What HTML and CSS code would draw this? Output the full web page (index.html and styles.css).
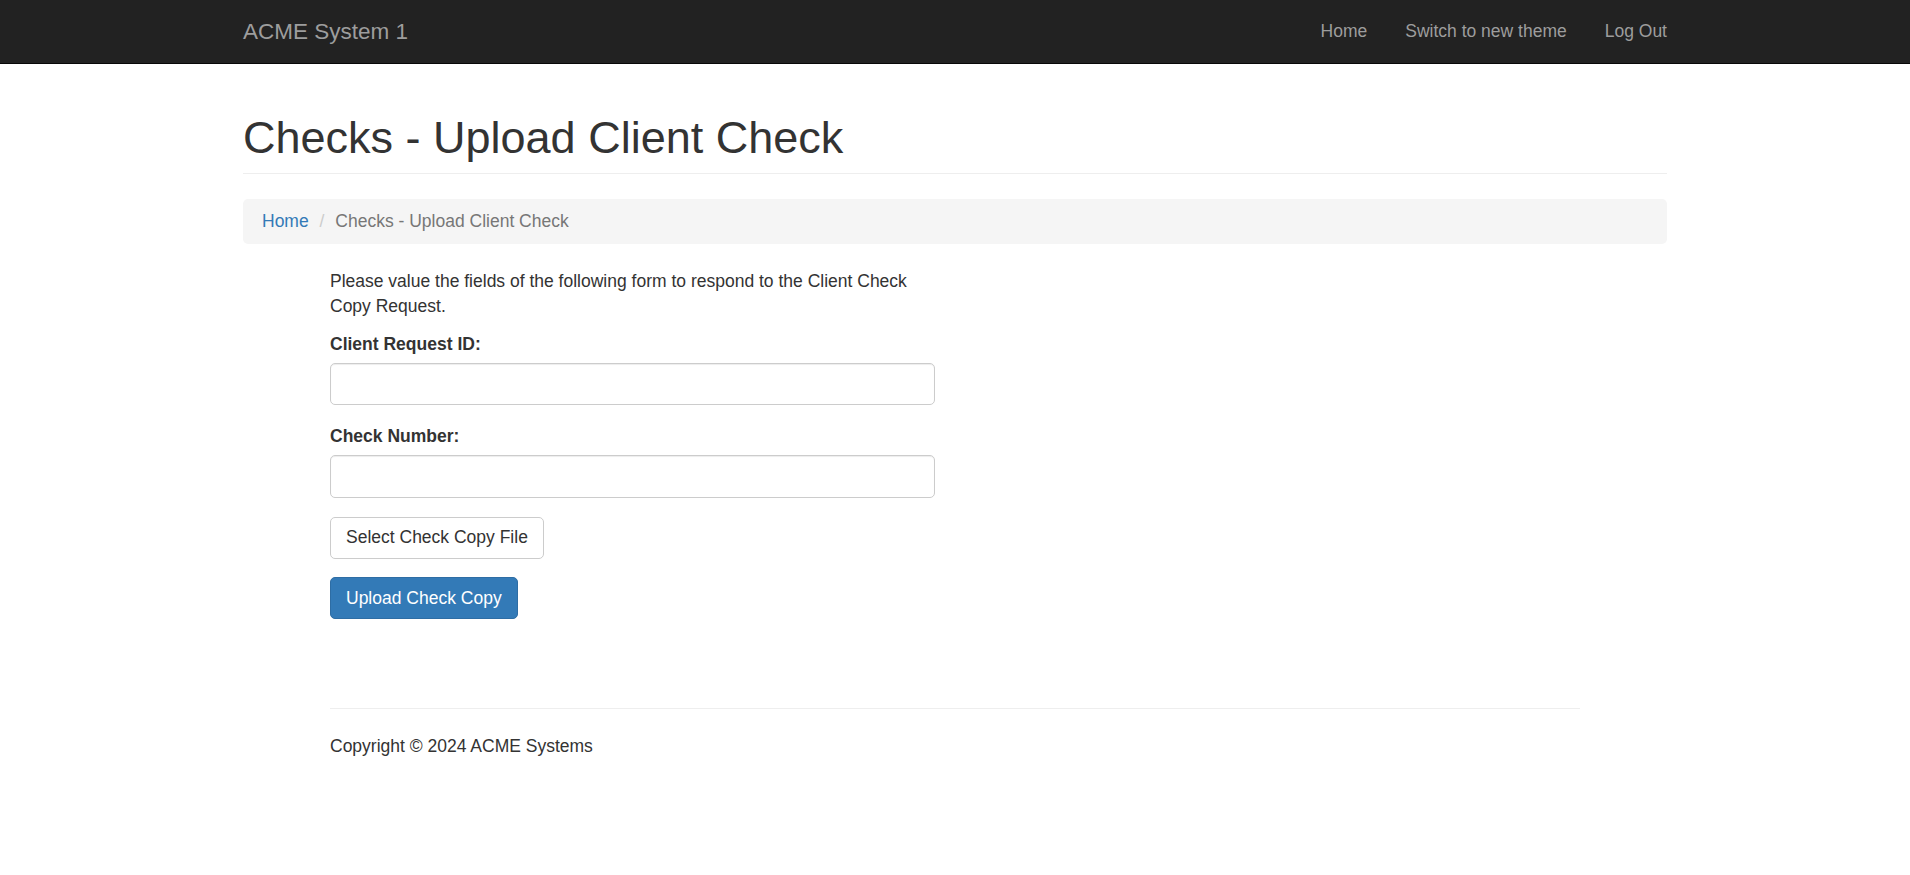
FILE: index.html
```html
<!DOCTYPE html>
<html lang="en">
<head>
<meta charset="utf-8">
<title>Checks - Upload Client Check</title>
<link rel="stylesheet" href="styles.css">
</head>
<body>
<nav class="navbar">
  <div class="container navbar-inner">
    <a class="brand" href="#">ACME System 1</a>
    <ul class="nav">
      <li><a href="#">Home</a></li>
      <li><a href="#">Switch to new theme</a></li>
      <li><a href="#">Log Out</a></li>
    </ul>
  </div>
</nav>
<div class="container">
  <h1 class="page-header">Checks - Upload Client Check</h1>
  <ol class="breadcrumb">
    <li><a href="#">Home</a></li>
    <li class="active">Checks - Upload Client Check</li>
  </ol>
</div>
<div class="inner">
  <form class="form">
    <p class="intro">Please value the fields of the following form to respond to the Client Check Copy Request.</p>
    <div class="form-group">
      <label for="reqid">Client Request ID:</label>
      <input id="reqid" class="form-control" type="text">
    </div>
    <div class="form-group">
      <label for="checknum">Check Number:</label>
      <input id="checknum" class="form-control" type="text">
    </div>
    <div class="form-group">
      <button type="button" class="btn btn-default">Select Check Copy File</button>
    </div>
    <div class="form-group">
      <button type="button" class="btn btn-primary">Upload Check Copy</button>
    </div>
  </form>
  <hr class="footer-rule">
  <footer class="footer">
    <p>Copyright © 2024 ACME Systems</p>
  </footer>
</div>
</body>
</html>
```
FILE: styles.css
```css
* {
  box-sizing: border-box;
}

html, body {
  margin: 0;
  padding: 0;
}

body {
  font-family: "Liberation Sans", Arial, Helvetica, sans-serif;
  font-size: 17.5px;
  line-height: 25px;
  color: #333;
  background: #fff;
}

a {
  color: #337ab7;
  text-decoration: none;
}

.container {
  width: 1462px;
  margin: 0 auto;
  padding: 0 19px;
}

/* Navbar */
.navbar {
  background: #222;
  border-bottom: 1px solid #080808;
  height: 64px;
}

.navbar-inner {
  display: flex;
  justify-content: space-between;
  align-items: flex-start;
}

.brand {
  color: #9d9d9d;
  font-size: 22.5px;
  line-height: 25px;
  padding: 19px 19px 19px;
  margin-left: -19px;
  height: 63px;
}

.nav {
  list-style: none;
  margin: 0 -19px 0 0;
  padding: 0;
  display: flex;
}

.nav a {
  display: block;
  color: #9d9d9d;
  padding: 19px 19px 19px;
  line-height: 25px;
}

/* Page header */
.page-header {
  font-size: 45px;
  font-weight: 500;
  line-height: 1.1;
  margin: 48.5px 0 25px;
  padding-bottom: 11px;
  border-bottom: 1px solid #eee;
}

/* Breadcrumb */
.breadcrumb {
  list-style: none;
  margin: 0 0 25px;
  padding: 10px 19px;
  background: #f5f5f5;
  border-radius: 5px;
}

.breadcrumb li {
  display: inline-block;
}

.breadcrumb li + li::before {
  content: "/\00a0";
  padding: 0 6px;
  color: #ccc;
}

.breadcrumb .active {
  color: #777;
}

/* Inner content */
.inner {
  width: 1250px;
  margin: 0 auto;
}

.form {
  width: 605px;
}

.intro {
  margin: 0 0 12.5px;
}

.form-group {
  margin-bottom: 18.75px;
}

.form-group label {
  display: inline-block;
  font-weight: bold;
  margin-bottom: 6.25px;
}

.form-control {
  display: block;
  width: 100%;
  height: 42.5px;
  padding: 7.5px 15px;
  font: inherit;
  color: #555;
  background: #fff;
  border: 1px solid #ccc;
  border-radius: 5px;
  box-shadow: inset 0 1px 1px rgba(0, 0, 0, 0.075);
}

.btn {
  display: inline-block;
  font: inherit;
  line-height: 25px;
  padding: 7.5px 15px;
  border: 1px solid transparent;
  border-radius: 5px;
  cursor: pointer;
}

.btn-default {
  background: #fff;
  color: #333;
  border-color: #ccc;
}

.btn-primary {
  background: #337ab7;
  color: #fff;
  border-color: #2e6da4;
}

.footer-rule {
  border: 0;
  border-top: 1px solid #eee;
  margin: 88.5px 0 25px;
}

.footer p {
  margin: 0 0 12.5px;
}
```
